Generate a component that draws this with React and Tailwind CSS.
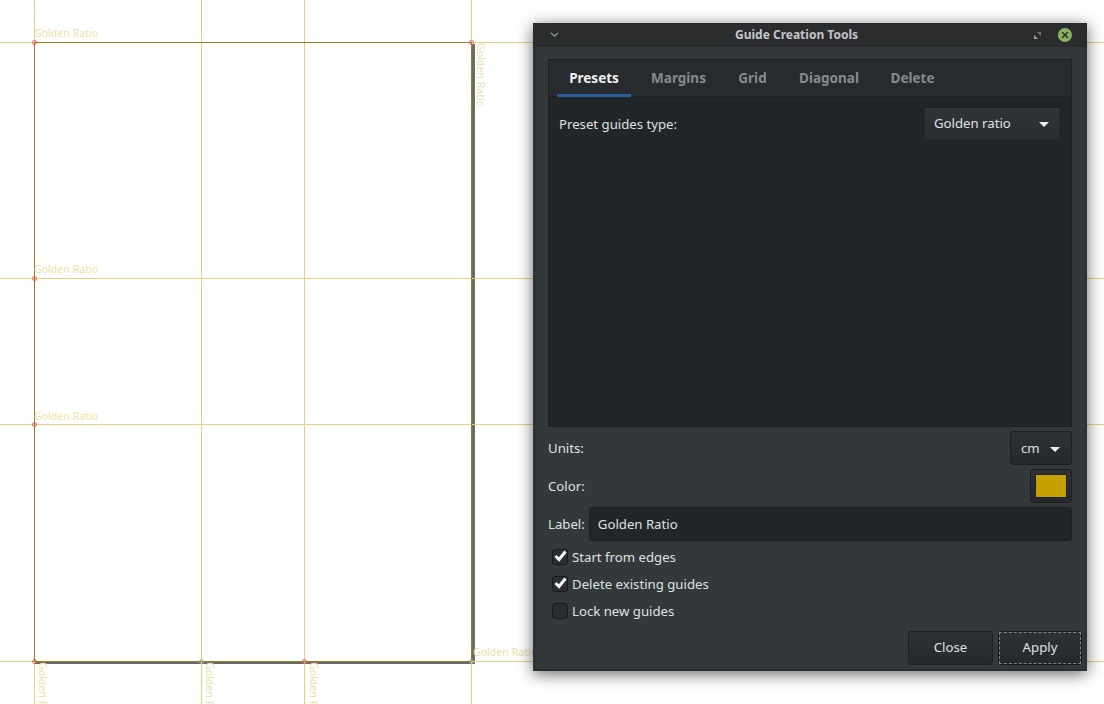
import React from "react";

const light = "#e5d27f";
const dark = "#94801c";
const red = "#f0605a";
const gray = "#b9a0a0";

const hLabels = [
  [34, 26],
  [34, 262],
  [34, 409],
  [473, 645],
];
const vLabels = [
  [474, 43, 70],
  [36, 662, 42],
  [203, 662, 42],
  [307, 662, 42],
];

function CanvasDrawing() {
  return (
    <svg className="absolute inset-0" width="1104" height="704" shapeRendering="crispEdges">
      <rect x="472" y="44" width="3" height="620" fill="#6b6b6b" />
      <rect x="35" y="662" width="440" height="2" fill="#6b6b6b" />
      {[42, 278, 424, 661].map((y) => (
        <rect key={y} x="0" y={y} width="1104" height="1" fill={light} />
      ))}
      {[34, 201, 304, 471].map((x) => (
        <rect key={x} x={x} y="0" width="1" height="704" fill={light} />
      ))}
      <rect x="34" y="42" width="437" height="1" fill={dark} />
      <rect x="34" y="661" width="437" height="1" fill={dark} />
      <rect x="34" y="42" width="1" height="619" fill={dark} />
      <rect x="471" y="42" width="1" height="619" fill={dark} />
      <g shapeRendering="auto" fill="none" strokeWidth="1">
        {[
          [34.5, 42.5, red],
          [34.5, 278.5, red],
          [34.5, 424.5, red],
          [471.5, 42.5, red],
          [34.5, 661.5, red],
          [201.5, 661.5, gray],
          [304.5, 661.5, red],
          [471.5, 661.5, gray],
        ].map(([cx, cy, c]) => (
          <circle key={`${cx}-${cy}`} cx={cx} cy={cy} r="2" stroke={c} />
        ))}
      </g>
    </svg>
  );
}

function Check({ checked, label }) {
  return (
    <div className="flex items-center h-[27px] pl-[4px] gap-[4px]">
      <div className="-mt-[2px] w-[16px] h-[16px] rounded-[3px] bg-[#2b2e31] border border-[#17191a] flex items-center justify-center">
        {checked && (
          <svg className="-mt-[2px]" width="13" height="13" viewBox="0 0 13 13">
            <path d="M1.5 7 L5 10.5 L11.5 2.5" fill="none" stroke="#f4f5f5" strokeWidth="3" />
          </svg>
        )}
      </div>
      <span className="text-[13.2px] text-[#dde1e4]">{label}</span>
    </div>
  );
}

function Caret() {
  return (
    <svg width="10" height="5" viewBox="0 0 10 5">
      <path d="M0 0 H10 L5 5 Z" fill="#eff0f1" />
    </svg>
  );
}

export default function App() {
  return (
    <div className="relative w-[1104px] h-[704px] overflow-hidden bg-white font-['Noto_Sans',sans-serif]">
      <CanvasDrawing />

      {hLabels.map(([x, y]) => (
        <div key={`${x}-${y}`} className="absolute text-[10.6px] leading-[14px] text-[#ecdfa6] whitespace-nowrap" style={{ left: x, top: y }}>
          Golden Ratio
        </div>
      ))}
      {vLabels.map(([x, y, h]) => (
        <div key={x} className="absolute overflow-hidden" style={{ left: x, top: y, width: 14, height: h }}>
          <div className="absolute left-[14px] top-0 origin-top-left rotate-90 text-[10.6px] leading-[14px] text-[#ecdfa6] whitespace-nowrap">Golden Ratio</div>
        </div>
      ))}

      {/* dialog window */}
      <div className="absolute left-[533px] top-[23px] w-[554px] h-[648px] flex flex-col shadow-[0_3px_15px_rgba(0,0,0,0.6)]">
        <div className="relative h-[24px] shrink-0 flex items-center justify-center pr-[27px] bg-[#2a2c2e]">
          <svg className="absolute left-[17px] top-[9px]" width="9" height="6" viewBox="0 0 9 6">
            <path d="M1 1 L4.5 4 L8 1" fill="none" stroke="#8c8f91" strokeWidth="1.6" />
          </svg>
          <span className="text-[12px] font-bold text-[#c4c7c9]">Guide Creation Tools</span>
          <svg className="absolute left-[501px] top-[9px]" width="7" height="7" viewBox="0 0 7 7">
            <path d="M3 0 H7 V4 Z" fill="#6f7274" />
            <path d="M0 3 V7 H4 Z" fill="#a0a2a4" />
          </svg>
          <div className="absolute left-[525px] top-[5px] w-[14px] h-[14px] rounded-full bg-[#8bb35f] flex items-center justify-center">
            <svg width="8" height="8" viewBox="0 0 8 8">
              <path d="M1 1 L7 7 M7 1 L1 7" stroke="#2f3a2c" strokeWidth="1.7" />
            </svg>
          </div>
        </div>

        <div className="flex-1 flex flex-col bg-[#33383b] border-x-[3px] border-x-[#2f3336] border-b-2 border-b-[#2a2c2e] pl-[12px] pr-[12px] pt-[12px]">
          {/* notebook */}
          <div className="h-[368px] shrink-0 flex flex-col bg-[#232629] border border-[#1d1f21]">
            <div className="h-[37px] shrink-0 flex pl-[8px] bg-[#282b2e] border-b border-[#1d1f21] text-[13.5px] font-bold text-[#868a8c]">
              <div className="w-[74px] h-[37px] pt-[2px] flex items-center justify-center text-[#eff0f1] border-b-[3px] border-[#2a5f9e]">Presets</div>
              <div className="w-[95px] flex items-center justify-center">Margins</div>
              <div className="w-[53px] flex items-center justify-center">Grid</div>
              <div className="w-[100px] flex items-center justify-center">Diagonal</div>
              <div className="w-[67px] flex items-center justify-center">Delete</div>
            </div>
            <div className="flex items-start justify-between pl-[10px] pr-[10px] pt-[10px]">
              <span className="text-[13.2px] text-[#dde1e4] leading-[34px]">Preset guides type:</span>
              <div className="w-[138px] h-[34px] flex items-center justify-between pl-[10px] pr-[11px] rounded-[3px] bg-gradient-to-b from-[#313437] to-[#2a2d30] border border-[#1d1f21] text-[13.2px] text-[#dde1e4]">
                <span>Golden ratio</span>
                <Caret />
              </div>
            </div>
          </div>

          {/* options */}
          <div className="mt-[4px] flex flex-col gap-[4px]">
            <div className="flex items-center justify-between h-[34px]">
              <span className="pt-[2px] text-[13.2px] text-[#dde1e4]">Units:</span>
              <div className="w-[62px] h-[34px] flex items-center justify-between pl-[10px] pr-[11px] pt-[2px] rounded-[3px] bg-gradient-to-b from-[#2f3235] to-[#26292b] border border-[#1d1f21] text-[13.2px] text-[#dde1e4]">
                <span>cm</span>
                <Caret />
              </div>
            </div>
            <div className="flex items-center justify-between h-[34px]">
              <span className="pt-[2px] text-[13.2px] text-[#dde1e4]">Color:</span>
              <div className="w-[42px] h-[34px] flex items-center justify-center rounded-[3px] bg-gradient-to-b from-[#2f3235] to-[#26292b] border border-[#1d1f21]">
                <div className="w-[32px] h-[24px] bg-[#c4a000] border border-[#1d1f21]" />
              </div>
            </div>
            <div className="flex items-center h-[34px] gap-[4px]">
              <span className="pt-[2px] text-[13.2px] text-[#dde1e4]">Label:</span>
              <div className="flex-1 h-[34px] flex items-center pl-[8px] pt-[2px] rounded-[3px] bg-[#232629] border border-[#1d1f21] text-[13.2px] text-[#dde1e4]">Golden Ratio</div>
            </div>
          </div>

          <div className="mt-[3px]">
            <Check checked label="Start from edges" />
            <Check checked label="Delete existing guides" />
            <Check label="Lock new guides" />
          </div>

          <div className="mt-auto mb-[4px] flex justify-end gap-[5px] -mr-[10px]">
            <div className="w-[85px] h-[34px] flex items-center justify-center rounded-[3px] bg-gradient-to-b from-[#2f3235] to-[#26292b] border border-[#1d1f21] text-[13.2px] text-[#dde1e4]">Close</div>
            <div className="w-[84px] h-[34px] rounded-[3px] bg-gradient-to-b from-[#2f3235] to-[#26292b] border border-[#17191a]">
              <div className="w-full h-full flex items-center justify-center border border-dashed border-[#7e8284] text-[13.2px] text-[#dde1e4]">Apply</div>
            </div>
          </div>
        </div>
      </div>
    </div>
  );
}
